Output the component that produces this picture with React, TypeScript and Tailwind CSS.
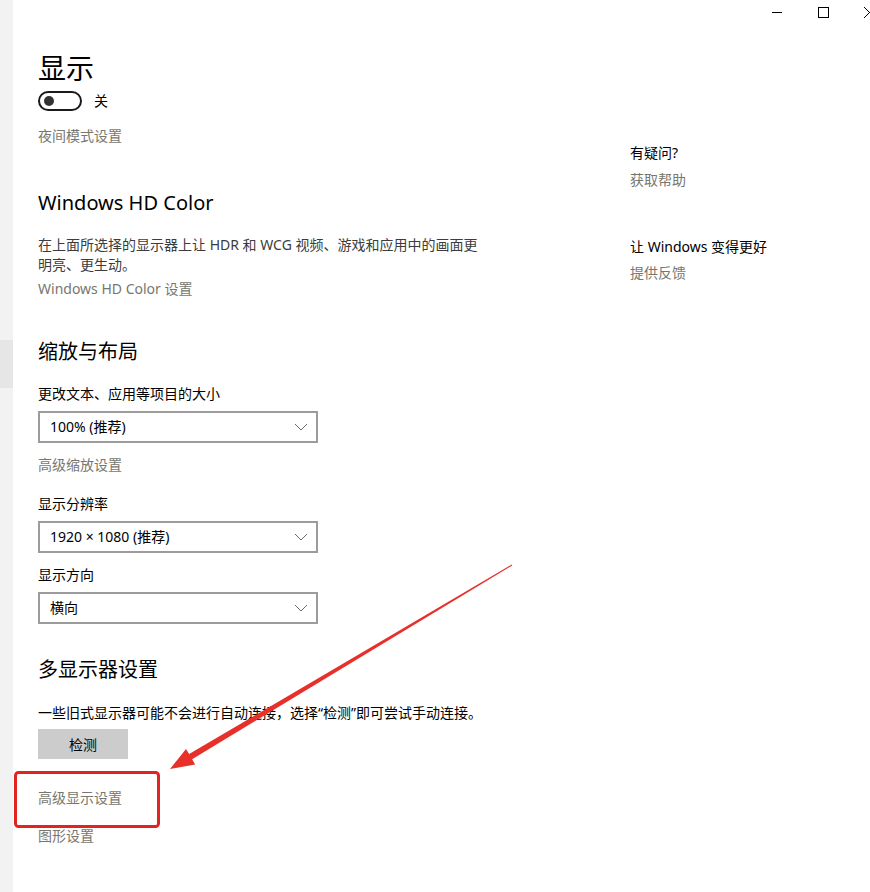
import React from "react";

const font = { fontFamily: '"Noto Sans", "Noto Sans CJK SC", sans-serif' };

function Chevron() {
  return (
    <svg width="14" height="8" viewBox="0 0 14 8" className="shrink-0">
      <path d="M1 1 L7 7 L13 1" fill="none" stroke="#6b6b6b" strokeWidth="1" />
    </svg>
  );
}

function Select({ value }: { value: string }) {
  return (
    <div className="flex h-[32px] w-[280px] items-center justify-between border-2 border-[#9c9c9c] bg-white pl-[10px] pr-[8px] text-[14px] leading-[20px] text-black">
      <span>{value}</span>
      <Chevron />
    </div>
  );
}

function Link({ children, className = "" }: { children: React.ReactNode; className?: string }) {
  return <div className={`h-[20px] text-[14px] leading-[20px] text-[#77776f] ${className}`}>{children}</div>;
}

function Label({ children, className = "" }: { children: React.ReactNode; className?: string }) {
  return <div className={`h-[20px] text-[14px] leading-[20px] text-black ${className}`}>{children}</div>;
}

function Heading({ children, className = "" }: { children: React.ReactNode; className?: string }) {
  return <div className={`h-[28px] text-[20px] leading-[28px] text-black ${className}`}>{children}</div>;
}

export default function App() {
  return (
    <div className="relative flex h-[892px] w-[870px] overflow-hidden bg-white" style={font}>
      <aside className="w-[13px] shrink-0 bg-[#f2f2f2]">
        <div className="mt-[340px] h-[48px] bg-[#e6e6e6]" />
      </aside>

      <main className="flex-1">
        {/* title bar */}
        <div className="flex h-[24px] items-start justify-end">
          <div className="mt-[12px] h-px w-[10px] bg-black" />
          <div className="ml-[36px] mt-[7px] h-[11px] w-[11px] border border-black" />
          <svg width="6" height="12" viewBox="0 0 6 12" className="ml-[35px] mt-[7px]">
            <path d="M0 0 L6 6 M0 11 L6 5" stroke="black" strokeWidth="1" />
          </svg>
        </div>

        <div className="flex pl-[25px]">
          {/* left column */}
          <div className="w-[592px] shrink-0">
            <div className="mt-[24px] h-[40px] text-[28px] leading-[40px] text-black">显示</div>
            <div className="mt-[3px] flex h-[20px] items-center">
              <div className="flex h-[20px] w-[44px] items-center rounded-full border-2 border-[#1a1a1a] pl-[4px]">
                <div className="h-[10px] w-[10px] rounded-full bg-[#333]" />
              </div>
              <span className="ml-[12px] text-[14px] leading-[20px] text-black">关</span>
            </div>
            <Link className="mt-[15px]">夜间模式设置</Link>

            <Heading className="mt-[43px]">Windows HD Color</Heading>
            <div className="mt-[18px] w-[445px] text-[14px] leading-[20px] text-[#3c3c3c]">
              在上面所选择的显示器上让 HDR 和 WCG 视频、游戏和应用中的画面更明亮、更生动。
            </div>
            <Link className="mt-[4px]">Windows HD Color 设置</Link>

            <Heading className="mt-[39px]">缩放与布局</Heading>
            <Label className="mt-[18px]">更改文本、应用等项目的大小</Label>
            <div className="mt-[7px]">
              <Select value="100% (推荐)" />
            </div>
            <Link className="mt-[12px]">高级缩放设置</Link>

            <Label className="mt-[19px]">显示分辨率</Label>
            <div className="mt-[7px]">
              <Select value="1920 × 1080 (推荐)" />
            </div>
            <Label className="mt-[12px]">显示方向</Label>
            <div className="mt-[7px]">
              <Select value="横向" />
            </div>

            <Heading className="mt-[32px]">多显示器设置</Heading>
            <Label className="mt-[19px]">一些旧式显示器可能不会进行自动连接，选择“检测”即可尝试手动连接。</Label>
            <button className="mt-[6px] flex h-[30px] w-[90px] items-center justify-center bg-[#cccccc] text-[14px] text-black">
              检测
            </button>
            <Link className="mt-[29px]">高级显示设置</Link>
            <Link className="mt-[18px]">图形设置</Link>
          </div>

          {/* right column */}
          <div className="flex-1">
            <Label className="mt-[119px]">有疑问?</Label>
            <Link className="mt-[7px]">获取帮助</Link>
            <Label className="mt-[47px]">让 Windows 变得更好</Label>
            <Link className="mt-[6px]">提供反馈</Link>
          </div>
        </div>
      </main>

      {/* annotation overlay */}
      <svg className="pointer-events-none absolute left-0 top-0" width="870" height="892" viewBox="0 0 870 892">
        <rect x="15.5" y="772.5" width="143" height="54" rx="3" fill="none" stroke="#e2231f" strokeWidth="3" />
        <polygon
          points="511.7,564.6 512.3,565.4 192.1,759.3 195.2,764.4 170,769 186,749 189.1,754.1"
          fill="#e8302a"
        />
      </svg>
    </div>
  );
}
